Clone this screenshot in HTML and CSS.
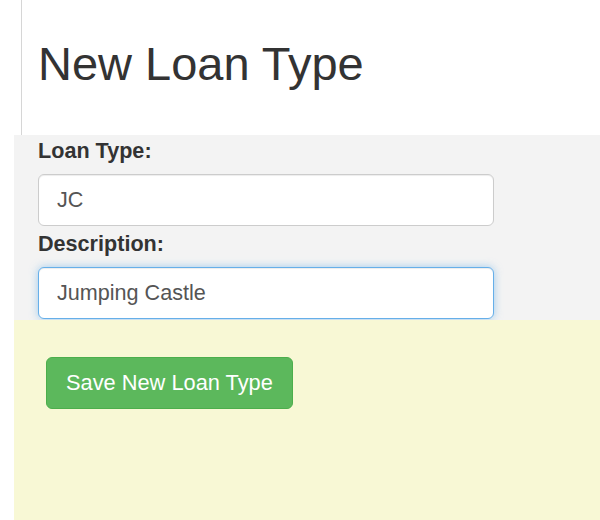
FILE: index.html
```html
<!DOCTYPE html>
<html lang="en">
<head>
  <meta charset="UTF-8">
  <title>New Loan Type</title>
  <link rel="stylesheet" href="styles.css">
</head>
<body>
  <div class="page-header">
    <h1>New Loan Type</h1>
  </div>

  <form class="loan-form">
    <div class="form-fields">
      <div class="form-group">
        <label for="loanType">Loan Type:</label>
        <input id="loanType" class="form-control" type="text" value="JC">
      </div>
      <div class="form-group">
        <label for="description">Description:</label>
        <input id="description" class="form-control" type="text" value="Jumping Castle" autofocus>
      </div>
    </div>
    <div class="form-actions">
      <button type="submit" class="btn btn-success">Save New Loan Type</button>
    </div>
  </form>

  <script>
    // put the caret at the end of the focused field
    const desc = document.getElementById('description');
    desc.focus();
    desc.setSelectionRange(desc.value.length, desc.value.length);
  </script>
</body>
</html>
```

FILE: styles.css
```css
body {
  margin: 0;
  background: #fff;
  font-family: 'Liberation Sans', Arial, sans-serif;
  font-size: 21.6px;
  line-height: 1.42857;
  color: #333;
}

.page-header {
  margin-left: 21px;
  padding: 38px 0 0 16px;
  height: 97px;
  border-left: 1px solid #d6d6d6;
}

.page-header h1 {
  margin: 0;
  font-size: 47px;
  font-weight: 400;
  line-height: 1.1;
  color: #333;
}

.loan-form {
  margin: 0 0 0 14px;
}

.form-fields {
  background: #f3f3f3;
  padding: 1px 0 0 24px;
  height: 184px;
}

.form-group {
  margin-bottom: 3px;
}

.form-group label {
  display: block;
  font-weight: 700;
  margin-bottom: 7px;
}

.form-control {
  display: block;
  box-sizing: border-box;
  width: 456px;
  height: 52px;
  padding: 0 18px;
  font-family: inherit;
  font-size: 21.6px;
  color: #555;
  background: #fff;
  border: 1px solid #ccc;
  border-radius: 6px;
  box-shadow: inset 0 1px 1px rgba(0, 0, 0, 0.075);
  outline: none;
  caret-color: #333;
}

.form-control:focus {
  border-color: #66afe9;
  box-shadow: inset 0 1px 1px rgba(0, 0, 0, 0.075), 0 0 9px rgba(102, 175, 233, 0.6);
}

.form-actions {
  background: #f8f8d5;
  height: 200px;
  padding: 37px 0 0 32px;
  box-sizing: border-box;
}

.btn {
  font-family: inherit;
  font-size: 21.8px;
  line-height: 1.42857;
  padding: 9px 19px;
  height: 52px;
  border-radius: 6px;
  cursor: pointer;
}

.btn-success {
  color: #fff;
  background: #5cb85c;
  border: 1px solid #4cae4c;
}
```
